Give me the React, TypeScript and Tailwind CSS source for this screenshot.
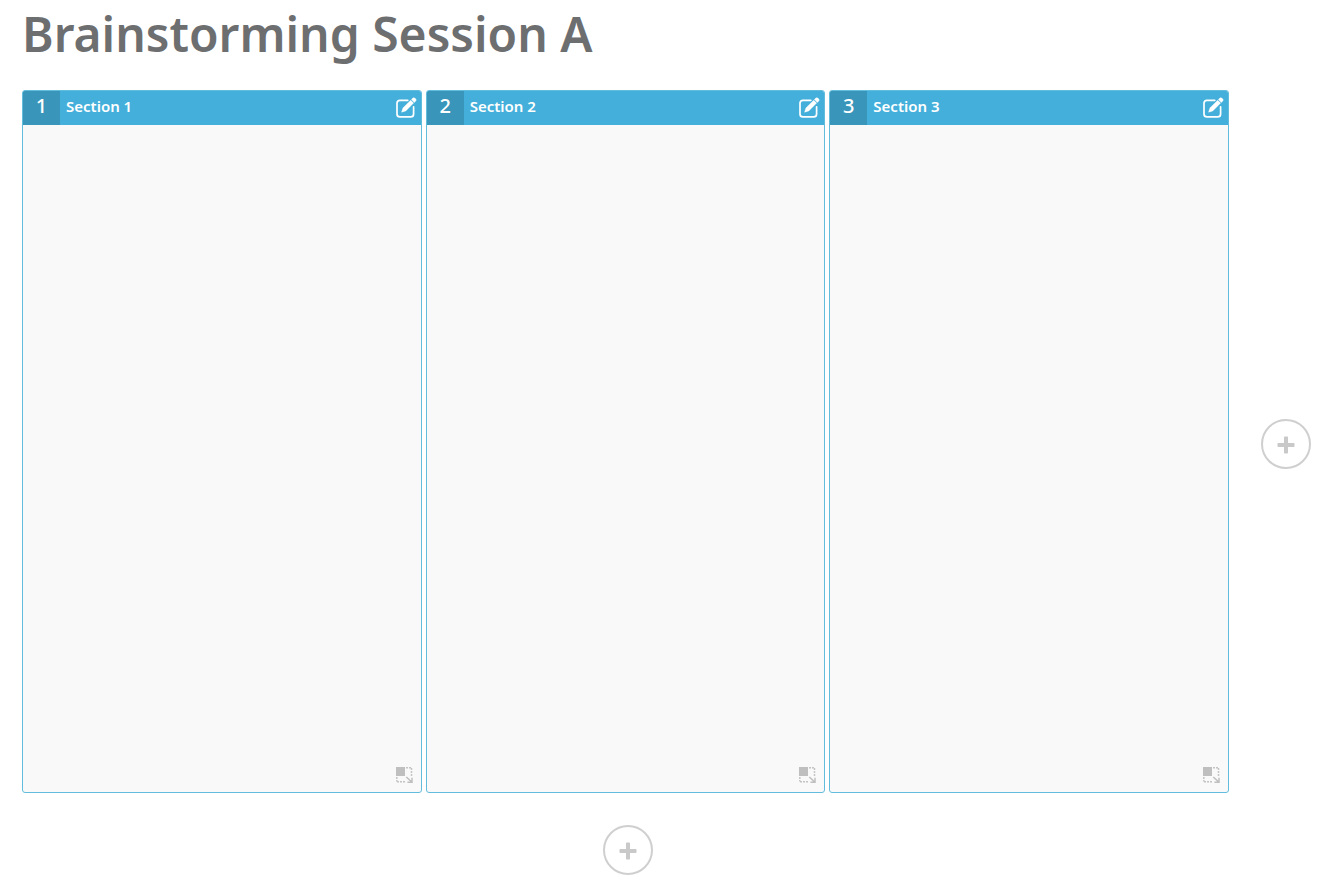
import React from "react";

const sections = [
  { id: 1, title: "Section 1" },
  { id: 2, title: "Section 2" },
  { id: 3, title: "Section 3" },
];

function EditIcon() {
  return (
    <svg viewBox="0 0 22 22" className="size-[22px]" fill="none" aria-hidden="true">
      <path
        d="M12.8 3.3H5A3 3 0 0 0 2 6.3V16.9A3 3 0 0 0 5 19.9H15.6A3 3 0 0 0 18.6 16.9V9.8"
        stroke="#fff"
        strokeWidth="1.7"
        strokeLinecap="round"
      />
      <path
        d="M6.6 15.2 7.9 11 15.7 3.2 18.6 6.1 10.8 13.9Z M16.4 2.5 17.8 1.1Q18.8.2 19.8 1.1L20.8 2.1Q21.7 3.1 20.8 4L19.4 5.4Z"
        fill="#fff"
        stroke="#fff"
        strokeWidth=".4"
        strokeLinejoin="round"
      />
    </svg>
  );
}

function ResizeIcon() {
  return (
    <svg viewBox="0 0 18 17" className="h-[17px] w-[18px]" fill="none" aria-hidden="true">
      <path d="M1 0H10V9H1Z" fill="#bfbfbf" />
      <path d="M11 .8H17M16.5 1V9M1.8 10V14.5M2 14.7H10" stroke="#c4c4c4" strokeWidth="1.5" strokeDasharray="2 1" />
      <path d="M11.3 10 16.5 14.8M17 10.8V15.2H12.4" stroke="#bfbfbf" strokeWidth="1.5" />
    </svg>
  );
}

function AddButton({ label }: { label: string }) {
  return (
    <button
      type="button"
      aria-label={label}
      className="flex size-[50px] shrink-0 items-center justify-center rounded-full border-2 border-[#cfcfcf] bg-white"
    >
      <svg viewBox="0 0 18 18" className="mt-0.5 size-[18px]" aria-hidden="true">
        <path
          d="M7.8 .5H10.2Q11 .5 11 1.3V7H16.7Q17.5 7 17.5 7.8V10.2Q17.5 11 16.7 11H11V16.7Q11 17.5 10.2 17.5H7.8Q7 17.5 7 16.7V11H1.3Q.5 11 .5 10.2V7.8Q.5 7 1.3 7H7V1.3Q7 .5 7.8 .5Z"
          fill="#c9c9c9"
        />
      </svg>
    </button>
  );
}

function SectionCard({ id, title }: { id: number; title: string }) {
  return (
    <section className="flex min-w-0 flex-1 flex-col overflow-hidden rounded-[3px] border border-[#62bddd] bg-[#f9f9f9]">
      <header className="flex h-[34px] shrink-0 items-center bg-[#44afda] text-white">
        <span className="flex h-full w-[37px] items-center justify-center bg-[#3996ba] pb-1 text-xl font-medium">{id}</span>
        <h2 className="flex-1 truncate pb-1 pl-1.5 text-[15px] font-semibold">{title}</h2>
        <button type="button" aria-label={`Edit ${title}`} className="mr-1">
          <EditIcon />
        </button>
      </header>
      <div className="flex flex-1 items-end justify-end pr-2 pb-2">
        <button type="button" aria-label={`Resize ${title}`}>
          <ResizeIcon />
        </button>
      </div>
    </section>
  );
}

export default function App() {
  return (
    <main className="flex min-h-screen flex-col bg-white pr-[13px] pb-[13px] pl-[22px] font-['Noto_Sans',sans-serif]">
      <h1 className="h-[90px] shrink-0 text-5xl leading-[68px] font-semibold whitespace-nowrap text-[#6d6e70]">
        Brainstorming Session A
      </h1>
      <div className="grid flex-1 grid-cols-[1fr_50px] grid-rows-[1fr_50px] gap-x-7 gap-y-7">
        <div className="flex gap-1 pr-1 pb-1">
          {sections.map((section) => (
            <SectionCard key={section.id} {...section} />
          ))}
        </div>
        <div className="flex items-center">
          <AddButton label="Add column" />
        </div>
        <div className="flex justify-center">
          <AddButton label="Add row" />
        </div>
      </div>
    </main>
  );
}
